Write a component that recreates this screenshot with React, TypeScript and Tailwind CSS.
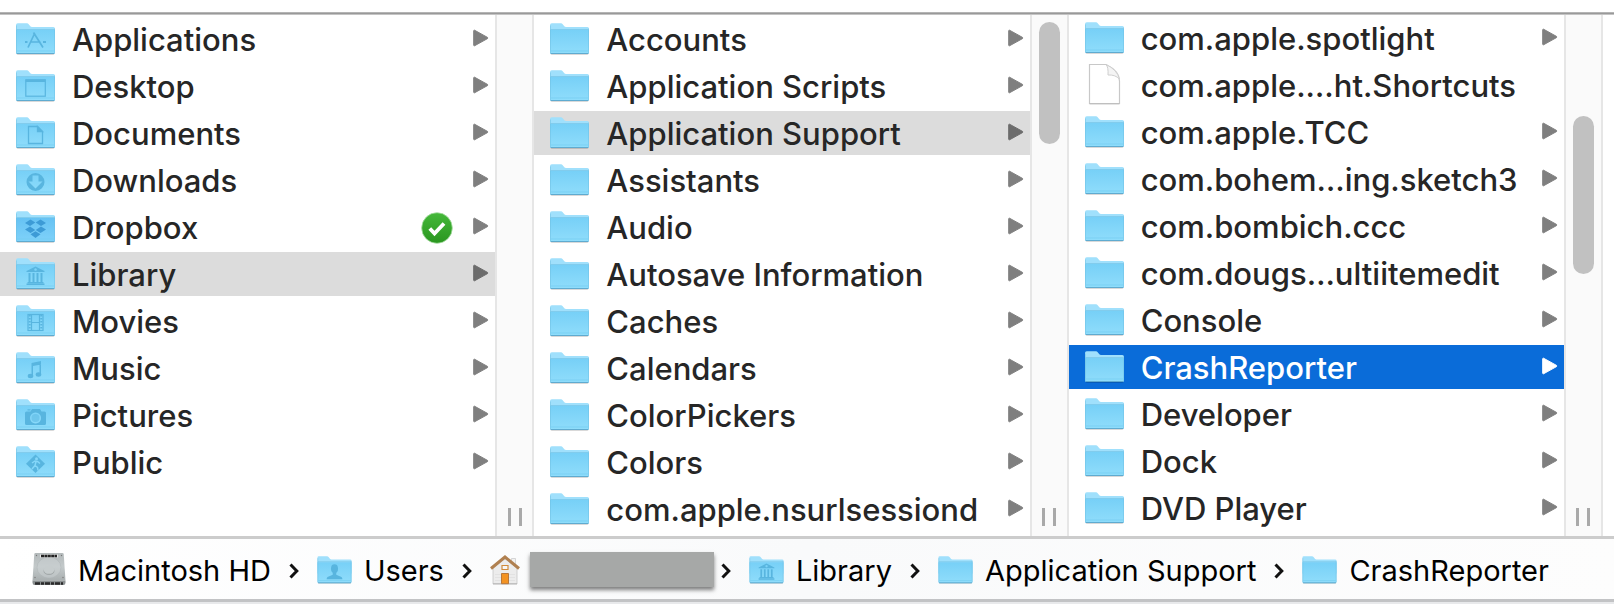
import React from 'react';

type Glyph =
  | 'apps'
  | 'desktop'
  | 'document'
  | 'download'
  | 'dropbox'
  | 'library'
  | 'movie'
  | 'music'
  | 'camera'
  | 'public'
  | 'user';

type Item = {
  name: string;
  glyph?: Glyph;
  file?: boolean;
  synced?: boolean;
};

const homeItems: Item[] = [
  { name: 'Applications', glyph: 'apps' },
  { name: 'Desktop', glyph: 'desktop' },
  { name: 'Documents', glyph: 'document' },
  { name: 'Downloads', glyph: 'download' },
  { name: 'Dropbox', glyph: 'dropbox', synced: true },
  { name: 'Library', glyph: 'library' },
  { name: 'Movies', glyph: 'movie' },
  { name: 'Music', glyph: 'music' },
  { name: 'Pictures', glyph: 'camera' },
  { name: 'Public', glyph: 'public' },
];

const libraryItems: Item[] = [
  { name: 'Accounts' },
  { name: 'Application Scripts' },
  { name: 'Application Support' },
  { name: 'Assistants' },
  { name: 'Audio' },
  { name: 'Autosave Information' },
  { name: 'Caches' },
  { name: 'Calendars' },
  { name: 'ColorPickers' },
  { name: 'Colors' },
  { name: 'com.apple.nsurlsessiond' },
];

const supportItems: Item[] = [
  { name: 'com.apple.spotlight' },
  { name: 'com.apple.…ht.Shortcuts', file: true },
  { name: 'com.apple.TCC' },
  { name: 'com.bohem…ing.sketch3' },
  { name: 'com.bombich.ccc' },
  { name: 'com.dougs…ultiitemedit' },
  { name: 'Console' },
  { name: 'CrashReporter' },
  { name: 'Developer' },
  { name: 'Dock' },
  { name: 'DVD Player' },
];

const GLYPH = '#58b5df';

// Glyphs share the folder's 39x32 coordinate space
const glyphs: Record<Glyph, React.ReactNode> = {
  apps: (
    <g stroke={GLYPH} strokeWidth="1.7" fill="none">
      <path d="M12 24.5 18.8 10M17.5 9.5 27 24.5M14.5 19h10" />
      <path d="M9 19h2.5M27 19h3" strokeWidth="2" />
    </g>
  ),
  desktop: (
    <g>
      <rect x="9.8" y="9.8" width="19.5" height="16.4" fill="none" stroke={GLYPH} strokeWidth="1.2" />
      <path d="M9.8 9.6h19.5v2.4H9.8z" fill={GLYPH} />
    </g>
  ),
  document: (
    <g stroke={GLYPH} strokeWidth="1.3" fill="none">
      <path d="M12.5 9.5h9l5 5V26.5h-14z" />
      <path d="M21.5 9.5v5h5z" fill={GLYPH} />
    </g>
  ),
  download: (
    <path
      fillRule="evenodd"
      fill={GLYPH}
      d="M19.5 9a9 9 0 1 1 0 18a9 9 0 0 1 0-18zM16.5 11.5v6h-4l7 7 7-7h-4v-6z"
    />
  ),
  dropbox: (
    <g fill="#3d9bd6">
      <path d="M14.5 8.5 19.3 11.5 14 15 9 12zM24.5 8.5 30 12 25 15 19.7 11.5z" />
      <path d="M14 15.5 19.3 19 14.5 22 9 18.5zM25 15.5 30 18.5 24.5 22 19.7 19z" />
      <path d="M14.5 23.2 19.5 20.2 24.5 23.2 19.5 27z" />
    </g>
  ),
  library: (
    <g fill={GLYPH}>
      <path fillRule="evenodd" d="M19.5 8.5 28.5 13v1h-18v-1zM19.5 10.2a1.3 1.3 0 1 0 .1 0z" />
      <path d="M12.5 15h2v9h-2zM16.5 15h2v9h-2zM20.5 15h2v9h-2zM24.5 15h2v9h-2zM11.5 24h16v1.2h-16zM10.5 25.5h18V27h-18z" />
    </g>
  ),
  movie: (
    <g stroke={GLYPH} fill="none">
      <rect x="12" y="9.5" width="15" height="16" strokeWidth="1.2" />
      <path d="M15.5 9.5v16M23.5 9.5v16M15.5 17.5h8" strokeWidth="1.2" />
      <path d="M13.7 10v15M25.3 10v15" strokeWidth="2" strokeDasharray="1.5 1.5" />
    </g>
  ),
  music: (
    <g fill={GLYPH}>
      <path d="M15.5 11 25 9v3.5L17 14v9h-1.5zM23.5 10H25v12h-1.5z" />
      <ellipse cx="14.5" cy="24" rx="2.8" ry="2.2" />
      <ellipse cx="22.5" cy="22.5" rx="2.8" ry="2.2" />
    </g>
  ),
  camera: (
    <g>
      <path
        fillRule="evenodd"
        fill={GLYPH}
        d="M10.5 12.5h4l1.5-2.5h8l1.5 2.5h3a1.5 1.5 0 0 1 1.5 1.5v10.5a1.5 1.5 0 0 1-1.5 1.5h-18A1.5 1.5 0 0 1 9 24.5V14a1.5 1.5 0 0 1 1.5-1.5zM19.5 13.5a5.5 5.5 0 1 0 .1 0z"
      />
      <circle cx="19.5" cy="19" r="4" fill={GLYPH} fillOpacity="0.5" />
      <path d="M11.5 10.3h3v1.2h-3z" fill={GLYPH} />
    </g>
  ),
  public: (
    <g>
      <path d="M19.5 8.5 29 17.8 19.5 27 10 17.8z" fill={GLYPH} />
      <circle cx="20.5" cy="12.8" r="1.5" fill="#85d7f9" />
      <path
        d="M16 17l3-2 2.5.5 2.5 2M20 15.5l-1 4 2.5 2 .5 3M19 19.5l-3 3.5"
        fill="none"
        stroke="#85d7f9"
        strokeWidth="1.5"
      />
    </g>
  ),
  user: (
    <g fill={GLYPH}>
      <ellipse cx="19.5" cy="14.5" rx="4" ry="5" />
      <path d="M17.5 18h4v3.5l6 2.5q1 .8 1 2.5h-18q0-1.7 1-2.5l6-2.5z" />
    </g>
  ),
};

function FolderIcon({ glyph, className }: { glyph?: Glyph; className: string }) {
  return (
    <svg viewBox="0 0 39 32" className={className} aria-hidden="true">
      <defs>
        <linearGradient id="folder-front" x1="0" y1="0" x2="0" y2="1">
          <stop offset="0" stopColor="#77d0f7" />
          <stop offset="1" stopColor="#90ddfb" />
        </linearGradient>
        <linearGradient id="folder-dropbox" x1="0" y1="0" x2="0" y2="1">
          <stop offset="0" stopColor="#66c2f3" />
          <stop offset="1" stopColor="#7fd2fa" />
        </linearGradient>
      </defs>
      <path d="M.5 30.5h38q0 1.2-1.5 1.2H2q-1.5 0-1.5-1.2z" fill="#000" fillOpacity="0.2" />
      <path
        d="M0 2Q0 .3 1.7.3H11q1 0 1.7.9l1.6 2q.7.8 1.7.8h21.3Q39 4 39 5.7V20H0z"
        fill="#a0e0fc"
      />
      <path
        d="M0 7h39v22.5q0 1.5-1.5 1.5h-36Q0 31 0 29.5z"
        fill={glyph === 'dropbox' ? 'url(#folder-dropbox)' : 'url(#folder-front)'}
      />
      <path d="M.5 6.5h38" stroke="#79c6e8" strokeWidth="0.8" />
      <path d="M.4 2.5V30M38.6 5.5V30" stroke="#6fc0e2" strokeOpacity="0.7" strokeWidth="0.8" />
      <path d="M1 28h37" stroke="#74cdf0" strokeWidth="0.7" />
      <path d="M.6 30.5h37.8" stroke="#5fabd0" strokeWidth="1" />
      {glyph && glyphs[glyph]}
    </svg>
  );
}

function FileIcon() {
  return (
    <svg viewBox="0 0 39 42" className="mb-0.5 h-[42px] w-[39px] shrink-0" aria-hidden="true">
      <path d="M4.5 1.5H21Q34.5 8 34.5 18v22.5h-30z" fill="#fff" stroke="#c8c8c8" strokeWidth="1.2" />
      <path d="M21 1.5q2.5 2.5 2 10.5 7-.5 11.5 4Q32 6.5 21 1.5z" fill="#f4f4f4" stroke="#cfcfcf" />
      <path d="M4.5 41.2h30" stroke="#000" strokeOpacity="0.15" />
    </svg>
  );
}

function Disclosure({ className }: { className: string }) {
  return (
    <svg viewBox="0 0 16 18" className={`mb-0.5 h-[18px] w-4 shrink-0 ${className}`} aria-hidden="true">
      <path
        d="M1.5 1.2 14.5 8.4q.8.6 0 1.2L1.5 16.8Q.7 17 .7 16V2Q.7 1 1.5 1.2z"
        fill="currentColor"
        stroke="currentColor"
        strokeLinejoin="round"
      />
    </svg>
  );
}

function SyncBadge() {
  return (
    <svg viewBox="0 0 32 32" className="mr-5 mt-0.5 size-8 shrink-0" role="img" aria-label="Synced">
      <defs>
        <linearGradient id="sync" x1="0" y1="0" x2="0" y2="1">
          <stop offset="0" stopColor="#45b83a" />
          <stop offset="1" stopColor="#2a961f" />
        </linearGradient>
      </defs>
      <circle cx="16" cy="16" r="15.3" fill="url(#sync)" stroke="#a5dca0" strokeWidth="0.8" />
      <path d="M8.8 16.5 13.5 21.5 23 11.5" fill="none" stroke="#fff" strokeWidth="3.8" />
    </svg>
  );
}

type ColumnProps = {
  label: string;
  items: Item[];
  selected: string;
  active?: boolean;
  thumb?: string;
  className: string;
};

function Column({ label, items, selected, active, thumb, className }: ColumnProps) {
  return (
    <section aria-label={label} className="flex min-w-0 flex-1">
      <ul className={`flex min-w-0 flex-1 flex-col gap-[3px] ${className}`}>
        {items.map((item) => {
          const isSelected = item.name === selected;
          let row = 'text-[#262626]';
          let arrow = 'text-[#7f7f7f]';
          if (isSelected && active) {
            row = 'bg-[#0a6cd9] text-white';
            arrow = 'text-white';
          } else if (isSelected) {
            row = 'bg-[#dcdcdc] text-[#262626]';
            arrow = 'text-[#6c6c6c]';
          }
          return (
            <li key={item.name}>
              <button
                type="button"
                aria-pressed={isSelected}
                className={`flex h-11 w-full items-center pl-4 pr-1.5 text-left text-[31px] leading-[44px] ${row}`}
              >
                {item.file ? (
                  <FileIcon />
                ) : (
                  <FolderIcon glyph={item.glyph} className="h-8 w-[39px] shrink-0" />
                )}
                <span className="ml-[17px] flex-1 whitespace-nowrap pt-px">{item.name}</span>
                {item.synced && <SyncBadge />}
                {!item.file && <Disclosure className={arrow} />}
              </button>
            </li>
          );
        })}
      </ul>
      <div className="flex w-[39px] shrink-0 flex-col items-center justify-between border-x-2 border-[#e6e6e6] bg-[#fafafa] pb-2.5">
        <div className={thumb ? `w-[21px] rounded-full bg-[#c1c1c1] ${thumb}` : ''} />
        <div className="flex h-[18px] w-3.5 cursor-col-resize justify-between">
          <span className="w-[3px] bg-[#a9a9a9]" />
          <span className="w-[3px] bg-[#a9a9a9]" />
        </div>
      </div>
    </section>
  );
}

function DriveIcon() {
  return (
    <svg viewBox="0 0 34 34" className="size-[34px] shrink-0" aria-hidden="true">
      <defs>
        <linearGradient id="drive" x1="0" y1="0" x2="0" y2="1">
          <stop offset="0" stopColor="#b3b9ba" />
          <stop offset="0.5" stopColor="#c3c9ca" />
          <stop offset="1" stopColor="#a9afb0" />
        </linearGradient>
      </defs>
      <path d="M3.5 1h27q1 0 1.2 1L33.5 28.5H.5L2.3 2q.2-1 1.2-1z" fill="url(#drive)" />
      <path d="M.5 28.5h33v2q0 2.5-2 2.500h-29q-2 0-2-2.500z" fill="#8a8f90" />
      <path d="M3 31.500h28" stroke="#2a2a2a" strokeWidth="2.400" strokeDasharray="5 1 3 1" />
      <ellipse cx="17" cy="15.5" rx="12" ry="10.500" fill="#ccd2d3" fillOpacity="0.5" stroke="#adb3b4" strokeWidth="0.5" />
      <ellipse cx="17" cy="19" rx="5.500" ry="4" fill="#a2a8a9" />
      <ellipse cx="17" cy="17.8" rx="5.300" ry="4" fill="#c6cccd" />
      <path d="M8 4h18" stroke="#e6e6e6" strokeWidth="3" />
      <path d="M9 4h16" stroke="#222" strokeWidth="2.5" strokeDasharray="3 .4" />
      <g fill="#777">
        <circle cx="4.5" cy="3.5" r="0.7" />
        <circle cx="29.5" cy="3.5" r="0.7" />
        <circle cx="3" cy="25.5" r="0.7" />
        <circle cx="31" cy="25.5" r="0.7" />
      </g>
    </svg>
  );
}

function HomeIcon() {
  return (
    <svg viewBox="0 0 30 30" className="mt-0.5 size-[30px] shrink-0" aria-hidden="true">
      <path d="M21.5 3.5h4v7h-4z" fill="#f2f2f2" stroke="#ccc" strokeWidth="0.8" />
      <path d="M3 13 15 3.5 27 13v16H3z" fill="#ececec" stroke="#c6c6c6" strokeWidth="0.8" />
      <path d="M5 19.5h20M5 22.5h20M5 25.5h20" stroke="#dcdcdc" strokeWidth="0.6" />
      <path d="M3 28.8h24" stroke="#b5b5b5" />
      <path d="M1 13.5 15 2 29 13.5" fill="none" stroke="#b08050" strokeWidth="3" />
      <path d="M12 10.5h6v4h-6z" fill="#f7f7f7" stroke="#d08b3c" strokeWidth="1.2" />
      <path d="M11.5 18.5h7v10.2h-7z" fill="#f39322" stroke="#b9783a" />
    </svg>
  );
}

function Chevron({ className }: { className: string }) {
  return (
    <svg viewBox="0 0 10 16" className={`mt-1 h-4 w-2.5 shrink-0 ${className}`} aria-hidden="true">
      <path d="M1.5 1.5 7.8 8 1.5 14.5" fill="none" stroke="#111" strokeWidth="3" />
    </svg>
  );
}

function Crumb({ name, icon }: { name: string; icon: React.ReactNode }) {
  return (
    <li>
      <button type="button" className="flex items-center gap-3 whitespace-nowrap">
        {icon}
        <span className="pt-1">{name}</span>
      </button>
    </li>
  );
}

function PathBar() {
  const folder = 'mt-0.5 h-7 w-[35px] shrink-0';
  return (
    <nav
      aria-label="Path"
      className="border-b-[3px] border-t-[3px] border-b-[#c2c3c5] border-t-[#cccccc] bg-linear-to-r from-white via-[#f9fafb] to-[#fdfdfd]"
    >
      <ol className="flex h-[60px] items-center pl-8 text-[29px] leading-[56px] font-normal text-black">
        <Crumb name="Macintosh HD" icon={<DriveIcon />} />
        <Chevron className="mx-[18px]" />
        <Crumb name="Users" icon={<FolderIcon glyph="user" className={folder} />} />
        <Chevron className="mx-[18px]" />
        <li>
          <button type="button" aria-label="Home folder" className="flex items-center gap-2.5">
            <HomeIcon />
            <span className="h-[35px] w-[184px] bg-[#a6a8a7] shadow-[0_3px_4px_rgba(0,0,0,0.5)]" />
          </button>
        </li>
        <Chevron className="ml-[7px] mr-[18px]" />
        <Crumb name="Library" icon={<FolderIcon glyph="library" className={folder} />} />
        <Chevron className="mx-[18px]" />
        <Crumb name="Application Support" icon={<FolderIcon className={folder} />} />
        <Chevron className="mx-[18px]" />
        <Crumb name="CrashReporter" icon={<FolderIcon className={folder} />} />
      </ol>
    </nav>
  );
}

export default function App() {
  return (
    <main className="overflow-hidden bg-white pt-3 font-['Inter','Liberation_Sans',sans-serif] font-[450]">
      <div className="h-[3px] border-y border-b-[#c4c4c4] border-t-[#b4b4b4] bg-[#999999]" />
      <div className="flex pr-[11px]">
        <Column label="Home" items={homeItems} selected="Library" className="pb-[5px] pt-0.5" />
        <Column
          label="Library"
          items={libraryItems}
          selected="Application Support"
          thumb="mt-[7px] h-[122px]"
          className="pb-[5px] pt-0.5"
        />
        <Column
          label="Application Support"
          items={supportItems}
          selected="CrashReporter"
          active
          thumb="mt-[101px] h-[158px]"
          className="pb-1.5 pt-px"
        />
      </div>
      <PathBar />
      <div className="h-0.5 bg-[#e8e9eb]" />
    </main>
  );
}
